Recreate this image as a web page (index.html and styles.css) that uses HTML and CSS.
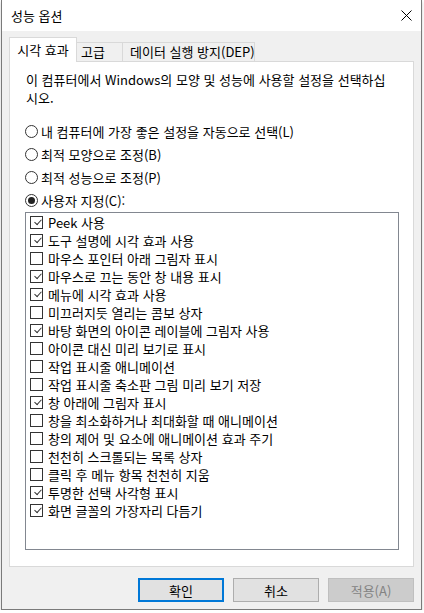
FILE: index.html
```html
<!DOCTYPE html>
<html lang="ko">
<head>
    <meta charset="UTF-8">
    <meta name="viewport" content="width=device-width, initial-scale=1.0">
    <title>성능 옵션</title>
    <link rel="stylesheet" href="styles.css">
</head>
<body>
    <div class="window">
        <div class="titlebar">
            <span class="title">성능 옵션</span>
            <svg class="close" width="11" height="11" viewBox="0 0 11 11">
                <path d="M0.5 0.5L10.5 10.5M10.5 0.5L0.5 10.5" stroke="#000" stroke-width="1" fill="none"/>
            </svg>
        </div>

        <div class="client">
            <div class="tabs">
                <div class="tab active">시각 효과</div>
                <div class="tab second">고급</div>
                <div class="tab third">데이터 실행 방지(DEP)</div>
            </div>

            <div class="panel">
                <p class="intro">이 컴퓨터에서 Windows의 모양 및 성능에 사용할 설정을 선택하십<br>시오.</p>

                <div class="radios">
                    <div class="radio-row"><span class="radio"></span>내 컴퓨터에 가장 좋은 설정을 자동으로 선택(L)</div>
                    <div class="radio-row"><span class="radio"></span>최적 모양으로 조정(B)</div>
                    <div class="radio-row"><span class="radio"></span>최적 성능으로 조정(P)</div>
                    <div class="radio-row"><span class="radio selected"></span>사용자 지정(C):</div>
                </div>

                <div class="list">
                    <div class="item"><span class="check on"></span>Peek 사용</div>
                    <div class="item"><span class="check on"></span>도구 설명에 시각 효과 사용</div>
                    <div class="item"><span class="check"></span>마우스 포인터 아래 그림자 표시</div>
                    <div class="item"><span class="check on"></span>마우스로 끄는 동안 창 내용 표시</div>
                    <div class="item"><span class="check on"></span>메뉴에 시각 효과 사용</div>
                    <div class="item"><span class="check"></span>미끄러지듯 열리는 콤보 상자</div>
                    <div class="item"><span class="check on"></span>바탕 화면의 아이콘 레이블에 그림자 사용</div>
                    <div class="item"><span class="check"></span>아이콘 대신 미리 보기로 표시</div>
                    <div class="item"><span class="check"></span>작업 표시줄 애니메이션</div>
                    <div class="item"><span class="check"></span>작업 표시줄 축소판 그림 미리 보기 저장</div>
                    <div class="item"><span class="check on"></span>창 아래에 그림자 표시</div>
                    <div class="item"><span class="check"></span>창을 최소화하거나 최대화할 때 애니메이션</div>
                    <div class="item"><span class="check"></span>창의 제어 및 요소에 애니메이션 효과 주기</div>
                    <div class="item"><span class="check"></span>천천히 스크롤되는 목록 상자</div>
                    <div class="item"><span class="check"></span>클릭 후 메뉴 항목 천천히 지움</div>
                    <div class="item"><span class="check on"></span>투명한 선택 사각형 표시</div>
                    <div class="item"><span class="check on"></span>화면 글꼴의 가장자리 다듬기</div>
                </div>
            </div>

            <div class="buttons">
                <button class="btn default">확인</button>
                <button class="btn">취소</button>
                <button class="btn" disabled>적용(A)</button>
            </div>
        </div>
    </div>
</body>
</html>
```

FILE: styles.css
```css
body {
    margin: 0;
    background: #fff;
    font-family: "Noto Sans CJK KR", "Liberation Sans", sans-serif;
    font-size: 13px;
    color: #000;
}
.window {
    margin-left: 1px;
    width: 419px;
    height: 609px;
    border: 1px solid #7a7a7a;
    border-top: none;
    background: #f0f0f0;
    box-shadow: 0 2px 3px rgba(0, 0, 0, 0.2);
    display: flex;
    flex-direction: column;
}
.titlebar {
    height: 31px;
    background: #fff;
    display: flex;
    align-items: center;
    justify-content: space-between;
    padding: 0 9px 0 9px;
}
.title {
    margin-top: -1px;
}
.close {
    display: block;
    margin-top: -1px;
}
.tabs {
    display: flex;
    align-items: flex-end;
    margin: 6px 0 0 7px;
}
.tab {
    box-sizing: border-box;
    height: 19px;
    line-height: 18px;
    border: 1px solid #d9d9d9;
    border-bottom: none;
    background: #f0f0f0;
    white-space: nowrap;
}
.tab.active {
    width: 68px;
    height: 25px;
    line-height: 23px;
    text-align: center;
    background: #fff;
    margin-bottom: -1px;
    position: relative;
    z-index: 1;
}
.tab.second {
    width: 46px;
    border-left: none;
    padding-left: 4px;
}
.tab.third {
    width: 133px;
    margin-left: -1px;
    padding-left: 7px;
}
.panel {
    height: 506px;
    box-sizing: border-box;
    margin: 0 7px 0 7px;
    border: 1px solid #d9d9d9;
    background: #fff;
    padding: 9px 16px 0 16px;
}
.intro {
    margin: 0;
    line-height: 18px;
}
.radios {
    margin-top: 13px;
    margin-left: -1px;
}
.radio-row {
    height: 23px;
    display: flex;
    align-items: center;
}
.radio {
    width: 11px;
    height: 11px;
    border: 1px solid #333;
    border-radius: 50%;
    margin-right: 3px;
    display: flex;
    align-items: center;
    justify-content: center;
    flex: none;
}
.radio.selected::after {
    content: "";
    width: 7px;
    height: 7px;
    border-radius: 50%;
    background: #222;
}
.list {
    margin-left: -1px;
    width: 374px;
    height: 338px;
    box-sizing: border-box;
    border: 1px solid #828790;
    padding: 0 0 0 4px;
}
.item {
    height: 18px;
    display: flex;
    align-items: center;
    white-space: nowrap;
}
.check {
    width: 11px;
    height: 11px;
    border: 1px solid #333;
    margin-right: 5px;
    position: relative;
    flex: none;
}
.check.on::after {
    content: "";
    position: absolute;
    left: 2px;
    top: 1px;
    width: 6px;
    height: 3px;
    border-left: 1px solid #333;
    border-bottom: 1px solid #333;
    transform: rotate(-48deg) translate(0px, 2px);
}
.buttons {
    display: flex;
    justify-content: flex-end;
    gap: 9px;
    margin: 11px 7px 0 0;
}
.btn {
    width: 86px;
    height: 24px;
    box-sizing: border-box;
    border: 1px solid #adadad;
    background: #e1e1e1;
    font-family: "Noto Sans CJK KR", "Liberation Sans", sans-serif;
    font-size: 13px;
    color: #000;
    padding: 0;
}
.btn.default {
    border: 2px solid #0078d7;
}
.btn:disabled {
    background: #cccccc;
    border-color: #bfbfbf;
    color: #838383;
}
```
